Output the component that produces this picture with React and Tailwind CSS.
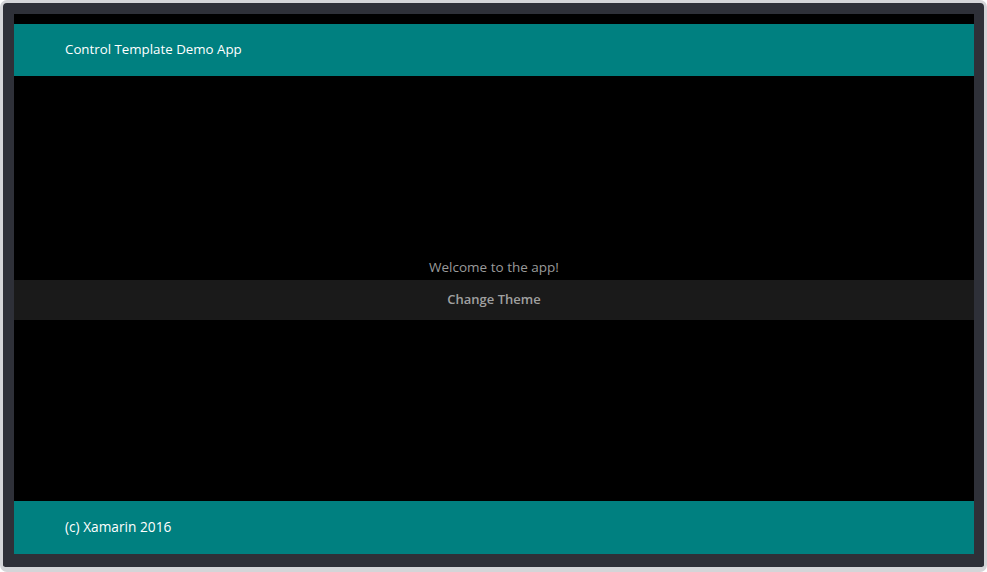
export default function App() {
  return (
    <div className="w-[987px] h-[572px] bg-white">
      <div
        className="w-[987px] h-[572px] rounded-[7px] border-[3px] border-b-[5px] border-[#d4d5d8] bg-[#2e3038] pl-[11px] pt-[11px] pr-[10px] pb-[13px] flex"
        style={{ fontFamily: '"Open Sans", "Noto Sans", sans-serif' }}
      >
        <div className="flex-1 flex flex-col bg-black pt-[10px]">
          <div className="h-[52px] shrink-0 bg-[#008080] flex items-center pl-[51px] pb-[1px] text-white text-[13.3px]">
            Control Template Demo App
          </div>
          <div className="flex-1 flex flex-col justify-center">
            <div className="text-center text-[#9a9a9a] text-[13.5px] leading-[20px] pb-[3px]">
              Welcome to the app!
            </div>
            <div className="h-[40px] bg-[#1a1a1a] flex items-center justify-center text-[#a0a0a0] text-[13px] font-semibold">
              Change Theme
            </div>
          </div>
          <div className="h-[53px] shrink-0 bg-[#008080] flex items-center pl-[51px] pb-[1px] text-white text-[13.7px]">
            (c) Xamarin 2016
          </div>
        </div>
      </div>
    </div>
  );
}
